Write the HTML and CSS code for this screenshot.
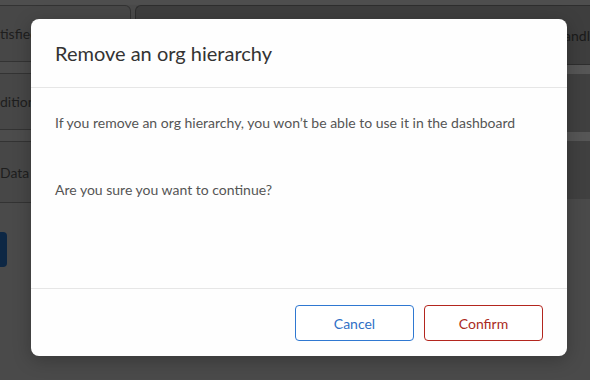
FILE: index.html
```html
<!DOCTYPE html>
<html lang="en">
<head>
  <meta charset="UTF-8" />
  <meta name="viewport" content="width=device-width, initial-scale=1.0" />
  <title>Remove an org hierarchy</title>
  <link rel="stylesheet" href="styles.css">
</head>
<body>
  <div class="topstrip"></div>
  <div class="page">
    <div class="side">
      <div class="side-card">tisfied you ar...</div>
      <div class="band"></div>
      <div class="side-card">ditional feed...</div>
      <div class="band"></div>
      <div class="side-card tall">Data - Person...</div>
      <div class="side-btn"></div>
    </div>
    <div class="main">
      <div class="main-card"><span>andl</span></div>
      <div class="band light"></div>
      <div class="main-row"></div>
      <div class="band light"></div>
      <div class="main-row"></div>
    </div>
  </div>

  <div class="modal">
    <div class="modal-header">Remove an org hierarchy</div>
    <div class="modal-body">
      <p>If you remove an org hierarchy, you won’t be able to use it in the dashboard</p>
      <p>Are you sure you want to continue?</p>
    </div>
    <div class="modal-footer">
      <button class="btn cancel">Cancel</button>
      <button class="btn confirm">Confirm</button>
    </div>
  </div>
</body>
</html>
```

FILE: styles.css
```css
body {
  margin: 0;
  font-family: Lato, "Noto Sans", sans-serif;
  background-color: #4a4a4a;
  height: 380px;
  overflow: hidden;
}

.topstrip {
  height: 5px;
  background-color: #4e4e4e;
}

.page {
  display: flex;
  gap: 4px;
}

.side {
  width: 131px;
  display: flex;
  flex-direction: column;
}

.side-card {
  height: 57px;
  background-color: #474747;
  border: 1px solid #333;
  border-left: none;
  border-radius: 0 6px 6px 0;
  box-sizing: border-box;
  display: flex;
  align-items: center;
  font-size: 14px;
  color: #1e1e1e;
  white-space: nowrap;
  overflow: hidden;
}

.side-card.tall {
  height: 62px;
}

.band {
  height: 11px;
  background-color: #4c4c4c;
}

.band.light {
  height: 9px;
  background-color: #565656;
}

.side-btn {
  width: 7px;
  height: 35px;
  margin-top: 29px;
  background-color: #0d2744;
  border-radius: 0 4px 4px 0;
}

.main {
  flex: 1;
  display: flex;
  flex-direction: column;
}

.main-card {
  height: 60px;
  background-color: #3e3e3e;
  border: 1px solid #2e2e2e;
  border-right: none;
  border-radius: 6px 0 0 0;
  box-sizing: border-box;
  display: flex;
  align-items: center;
  justify-content: flex-end;
  font-size: 14px;
  color: #1a1a1a;
  overflow: hidden;
}

.main-row {
  height: 58px;
  background-color: #404040;
}

.modal {
  position: absolute;
  top: 19px;
  left: 31px;
  width: 536px;
  height: 337px;
  background: #fefefe;
  border-radius: 8px;
  box-shadow: 0 4px 18px rgba(0, 0, 0, 0.25);
  display: flex;
  flex-direction: column;
  overflow: hidden;
}

.modal-header {
  height: 68px;
  padding: 0 24px;
  display: flex;
  align-items: center;
  font-size: 20px;
  color: #333;
  border-bottom: 1px solid #e6e6e6;
}

.modal-body {
  flex: 1;
  padding: 25px 24px 0;
  font-size: 14px;
  line-height: 20px;
  color: #555;
}

.modal-body p {
  margin: 0 0 47px;
}

.modal-footer {
  border-top: 1px solid #e6e6e6;
  padding: 16px 24px 15px;
  display: flex;
  justify-content: flex-end;
  gap: 10px;
}

.btn {
  width: 119px;
  height: 36px;
  background: #fff;
  border-radius: 4px;
  font-family: inherit;
  font-size: 14px;
  cursor: pointer;
}

.cancel {
  border: 1px solid #2f78d1;
  color: #2f6fc6;
}

.confirm {
  border: 1px solid #b3261e;
  color: #ab2a22;
}
```
